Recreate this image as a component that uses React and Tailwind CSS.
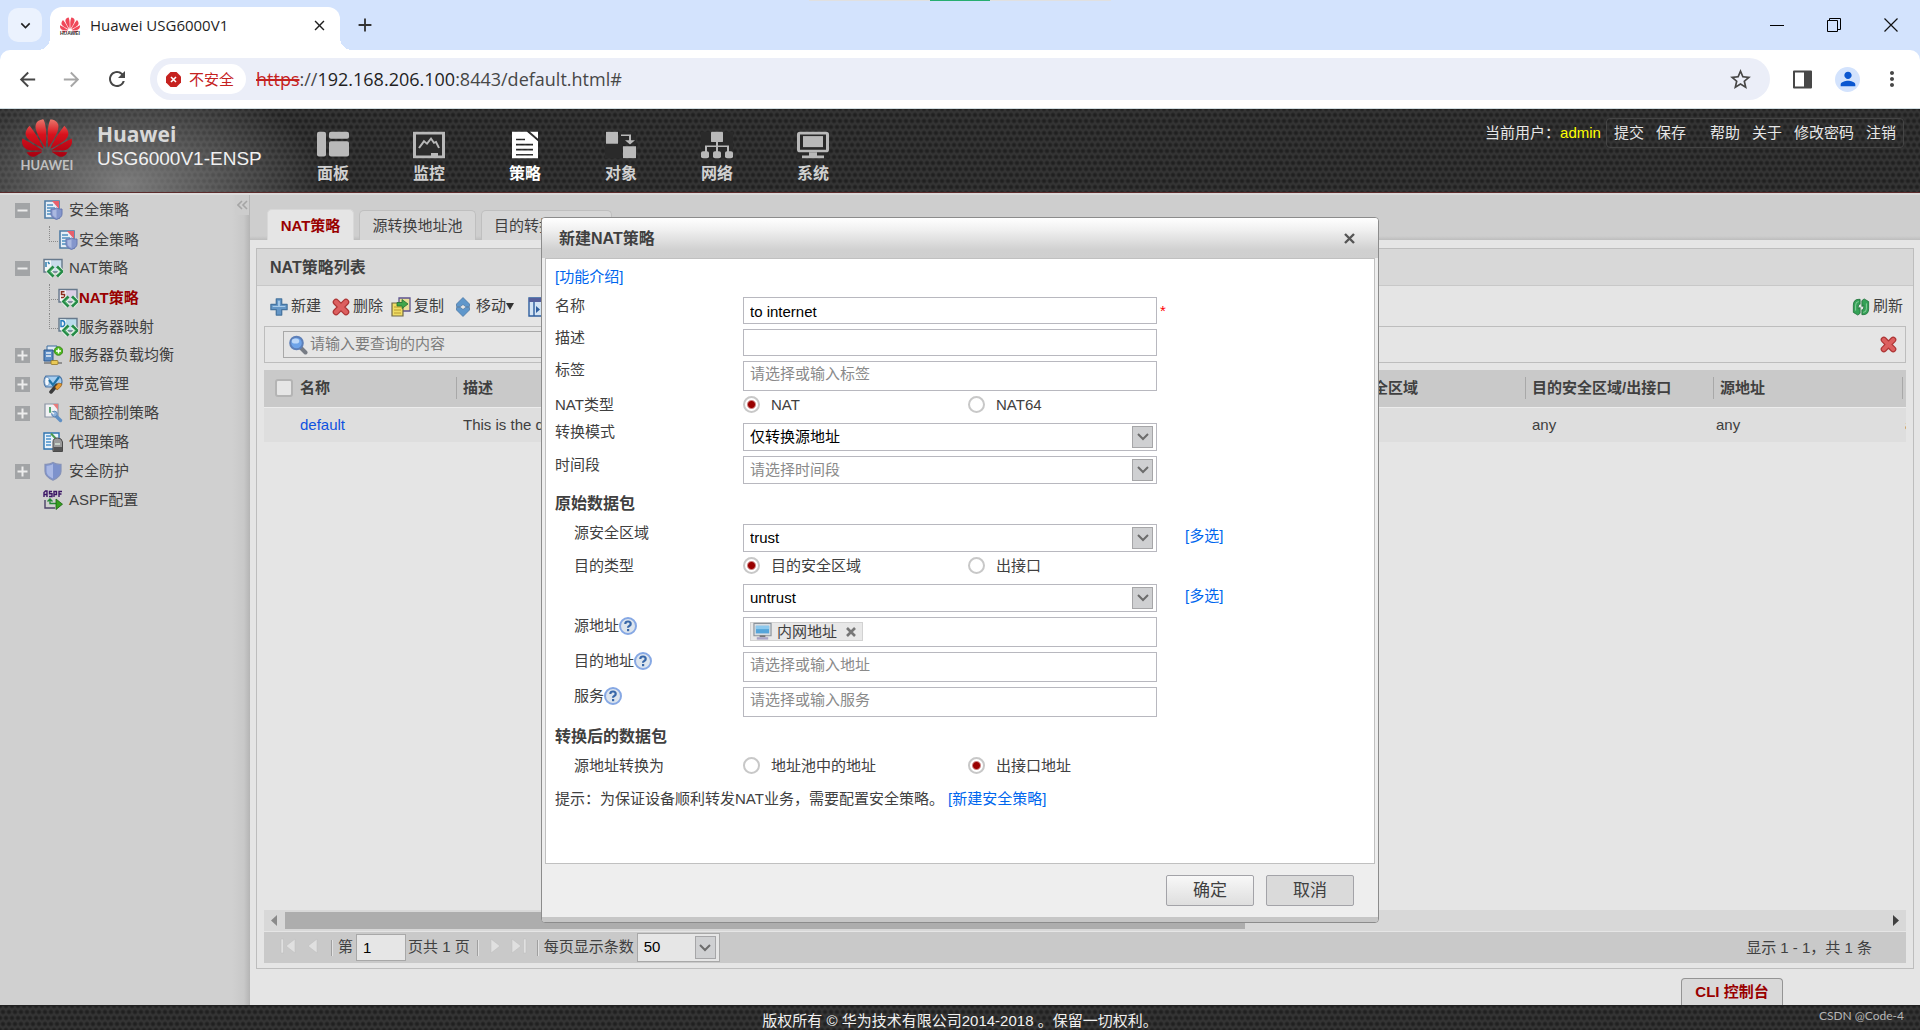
import React from "react";
import { SiHuawei } from "react-icons/si";
import {
  MdAdd,
  MdArrowBack,
  MdArrowForward,
  MdClose,
  MdExpandMore,
  MdMoreVert,
  MdPerson,
  MdRefresh,
  MdStarOutline,
} from "react-icons/md";

const DOTS =
  "bg-[#343434] bg-[radial-gradient(circle,#202020_0,#202020_1px,transparent_3px),radial-gradient(circle,#202020_0,#202020_1px,transparent_3px)] bg-[length:6px_12px] bg-[position:0_0,3px_6px]";

/* ---------- icons ---------- */

function Svg({ children, size = 20, box = 20, className = "" }) {
  return (
    <svg aria-hidden="true" width={size} height={size} viewBox={`0 0 ${box} ${box}`} className={`shrink-0 ${className}`}>
      {children}
    </svg>
  );
}

function PolicyIcon() {
  return (
    <Svg>
      <path d="M2 1h14v17H2z" fill="#e6eef6" stroke="#4f7ca5" strokeWidth="1.6" />
      <path d="M4 5h6M4 8h8M4 11h7M4 14h5" stroke="#4d8fc0" strokeWidth="1.5" />
      <path d="M9 1h7v8z" fill="#e8606c" />
      <path d="M13.500 8c2 1 3.500 1.200 5.500 1v5c0 2.500-2 4.200-5.500 5.500-3.500-1.300-5.500-3-5.500-5.500V9c2 .2 3.500 0 5.500-1z" fill="#8496cc" stroke="#6778b0" />
      <path d="M13.500 9.500V18c-2.500-1.200-4-2.300-4-4.500v-3.300c1.400 0 2.700-.2 4-.7z" fill="#aab8e0" />
    </Svg>
  );
}

function NatIcon({ letter = "", tint = "#c9dcea" }) {
  return (
    <Svg>
      <path d="M1 1.500h18v12.500H1z" fill={tint} stroke="#67798c" strokeWidth="1.400" />
      <path d="M2 2.500h6v10.500H2z" fill="#f4f6f8" />
      {letter === "S" && <path d="M6.500 3.800h-3v2.700h3v3h-3.500" fill="none" stroke="#8b2f20" strokeWidth="1.500" />}
      {letter === "D" && <path d="M3 3.800h1.500q2.200.3 2.200 2.900t-2.200 2.900H3z" fill="none" stroke="#2a80c0" strokeWidth="1.500" />}
      {letter === "" && <path d="M3 4v5M5 4l1.500 2" stroke="#2f7fae" strokeWidth="1.500" />}
      <path d="M10 9l-4 4.500 4 4.500M14.500 9l4 4.500-4 4.500" fill="none" stroke="#e6f3ea" strokeWidth="5" />
      <path d="M10.500 8.500l-5 5 5 5M14 8.500l5 5-5 5" fill="none" stroke="#258a47" strokeWidth="2.800" />
      <path d="M10 10.500l-3 3 3 3M14.500 10.500l3 3-3 3" fill="none" stroke="#6cc487" strokeWidth="1" />
    </Svg>
  );
}

function BalanceIcon() {
  return (
    <Svg>
      <path d="M4 1h10v5H4z" fill="#dfe9f3" stroke="#3f6ea0" />
      <path d="M1 5h9v11H1z" fill="#5c8cc4" stroke="#2b568c" />
      <path d="M3 8h5M3 11h5" stroke="#e8f1fa" strokeWidth="1.300" />
      <circle cx="15.500" cy="6" r="4.300" fill="#4eb81e" stroke="#2e7d12" strokeWidth=".8" />
      <path d="M15.500 3.500v5M13 6h5" stroke="#fff" strokeWidth="1.500" />
      <path d="M1 18h18" stroke="#7a7a7a" strokeWidth="1.500" />
      <rect x="8" y="15.500" width="7" height="4" rx="1" fill="#e9c956" stroke="#927524" strokeWidth=".8" />
    </Svg>
  );
}

function BandwidthIcon() {
  return (
    <Svg>
      <path d="M3 2h13q3 2 3 5.500T16 13H3q-2-2-2-5.500T3 2z" fill="#a5cdf0" stroke="#4a75a6" strokeWidth="1.200" />
      <ellipse cx="4" cy="7.500" rx="2.300" ry="4.500" fill="#f3f8fd" stroke="#5e86b3" strokeWidth=".8" />
      <path d="M6 6l4 5 6-8" fill="none" stroke="#1f74a8" strokeWidth="2.200" />
      <path d="M8 18l6-7" stroke="#3b3b3b" strokeWidth="3.500" strokeLinecap="round" />
      <path d="M12 13l3.500-4 3.500 1-1.500 3-3.500 3z" fill="#e49b35" stroke="#9c6216" strokeWidth=".7" />
    </Svg>
  );
}

function QuotaIcon() {
  return (
    <Svg>
      <path d="M2 1h13v13H2z" fill="#f1f1f4" stroke="#8a94a3" strokeWidth="1.200" />
      <path d="M10 1h5v6z" fill="#e67b7b" />
      <path d="M7 4v5h5" fill="none" stroke="#3b9a5a" strokeWidth="1.700" />
      <path d="M11 11l6.500 6.500" stroke="#5f8fc4" strokeWidth="3.400" strokeLinecap="round" />
      <circle cx="11.500" cy="11" r="2.800" fill="#8db3dc" stroke="#5f86b5" />
      <path d="M8 8.500l3 2.500" stroke="#f1f1f4" strokeWidth="1.500" />
    </Svg>
  );
}

function ProxyIcon() {
  return (
    <Svg>
      <path d="M1 1h15v16H1z" fill="#eaf3fa" stroke="#2f74b0" strokeWidth="1.400" />
      <path d="M3 4h5M3 7h5M3 10h5M3 13h5" stroke="#4b93cc" strokeWidth="1.400" />
      <path d="M8 1.500L15 9" stroke="#4a9b51" strokeWidth="2" />
      <path d="M10 10q0-4 4.500-4T19.500 10v9.500H10z" fill="#9a9a9a" stroke="#4b4b4b" />
      <path d="M10.500 15h8.500v4h-8.500z" fill="#555" />
      <path d="M12 12h5" stroke="#dff0df" strokeWidth="1.300" />
    </Svg>
  );
}

function ShieldIcon() {
  return (
    <Svg>
      <path d="M10 1.500c2.500 1.500 5 2 8 1.800v7c0 4-3 6.700-8 8.900-5-2.200-8-4.900-8-8.900v-7c3 .2 5.500-.3 8-1.800z" fill="#7d92cc" stroke="#8793b8" strokeWidth="1.200" />
      <path d="M10 3v14.500c-4-1.900-6.500-4-6.500-7.300V4.700C6 4.800 8 4.300 10 3z" fill="#a9b8e4" />
    </Svg>
  );
}

function AspfIcon() {
  return (
    <Svg>
      <path d="M1 7V2.500L2.500 1H4v6M1 4.500h3M9 1.500H6.500v2.300H9v2.700H6M11 7V1.500h2.500v3H11M16 7V1.500h3M16 4h2.500" fill="none" stroke="#3c1766" strokeWidth="1.400" />
      <path d="M2 10v8h10" fill="none" stroke="#4c4468" strokeWidth="1.400" />
      <path d="M7 9.500v4h6M4.500 11.500L7 9l2.500 2.500" fill="none" stroke="#238a35" strokeWidth="1.400" />
      <path d="M13 9l6.500 5.200L13 19.500z" fill="#34a01f" stroke="#1c5f12" strokeWidth=".8" />
    </Svg>
  );
}

function CrossIcon({ size = 18 }) {
  return (
    <Svg size={size}>
      <path d="M4.500 4.500l11 11M15.500 4.500l-11 11" stroke="#ad3535" strokeWidth="7.400" strokeLinecap="round" />
      <path d="M4.500 4.500l11 11M15.500 4.500l-11 11" stroke="#dc5f5f" strokeWidth="4.800" strokeLinecap="round" />
    </Svg>
  );
}

function PlusIcon() {
  return (
    <Svg size={18}>
      <path d="M7 1h6v6h6v6h-6v6H7v-6H1V7h6z" fill="#6496c6" stroke="#46749f" strokeWidth="1.400" strokeLinejoin="round" />
      <path d="M9 3h2v6h6v1H3V9h6z" fill="#a9cbe8" />
    </Svg>
  );
}

function CopyIcon() {
  return (
    <Svg>
      <path d="M8 1h11v13H8z" fill="#e9df9a" stroke="#5d5390" strokeWidth="1.300" />
      <path d="M1 6h11v13H1z" fill="#f0dd63" stroke="#6f6848" strokeWidth="1.200" />
      <path d="M3 10h7M3 13h7M3 16h7" stroke="#b79a30" strokeWidth="1.200" />
      <path d="M6 5.500h5V2.500l6 4.500-6 4.500V9H6z" fill="#3fa64b" stroke="#23702d" strokeWidth=".8" />
    </Svg>
  );
}

function MoveIcon() {
  return (
    <Svg>
      <path d="M10 .5l6.500 6.500v2.500h-4L10 7.500 7.500 9.500h-4V7z" fill="#5f97cb" stroke="#42719f" strokeWidth=".7" />
      <path d="M10 19.500l6.500-6.500v-2.500h-4L10 12.500l-2.500-2h-4V13z" fill="#5f97cb" stroke="#42719f" strokeWidth=".7" />
    </Svg>
  );
}

function InsertIcon() {
  return (
    <Svg>
      <path d="M1 1h18v18H1z" fill="#d4e4f4" stroke="#2f5f9f" strokeWidth="1.400" />
      <path d="M1 1h18v4H1z" fill="#56609c" />
      <path d="M6 5v14M14 5v14" stroke="#2f5f9f" strokeWidth="1.400" />
      <path d="M8 9l4 3.500L8 16z" fill="#2f5f9f" />
    </Svg>
  );
}

function SearchIcon() {
  return (
    <Svg>
      <path d="M12 12l5.500 5.500" stroke="#777c85" strokeWidth="4" strokeLinecap="round" />
      <circle cx="8.500" cy="8" r="6.300" fill="#6ea3e8" stroke="#5d7fb8" strokeWidth="2" />
      <ellipse cx="7.500" cy="6" rx="3.800" ry="2.600" fill="#bcd7f8" />
    </Svg>
  );
}

function RefreshGreen() {
  return (
    <Svg size={18}>
      <path d="M1.500 16V8q0-6.500 6-6.500H9v5.500h-.500q-1.500 0-1.500 2v3l2-1.500V17l-2.500 2z" fill="#35a257" stroke="#1c7038" strokeWidth=".9" />
      <path d="M18.500 4v8q0 6.500-6 6.500H11v-5.500h.500q1.500 0 1.500-2V8l-2 1.500V3l2.500-2z" fill="#35a257" stroke="#1c7038" strokeWidth=".9" />
      <path d="M4 14V8q0-4 3.500-4M16 6v6q0 4-3.500 4" fill="none" stroke="#8ed3a1" strokeWidth="1" />
    </Svg>
  );
}

function HelpIcon() {
  return (
    <button type="button" aria-label="帮助说明" className="h-[18px] w-[18px] shrink-0">
      <svg width="18" height="18" viewBox="0 0 18 18" aria-hidden="true">
        <circle cx="9" cy="9" r="8" fill="#dde5ee" stroke="#86a8e4" strokeWidth="2" />
        <path d="M6.300 7q0-2.500 2.700-2.500T11.700 7q0 1.200-1.500 2Q9 9.600 9 10.800" fill="none" stroke="#3867a8" strokeWidth="2.200" />
        <rect x="8" y="12" width="2.200" height="2.200" fill="#3867a8" />
      </svg>
    </button>
  );
}

function ComputerIcon() {
  return (
    <Svg size={19}>
      <path d="M1 1.500h18v13H1z" fill="#d8dde2" stroke="#8b939b" strokeWidth="1.200" />
      <path d="M3 4h14v8H3z" fill="#55a5da" />
      <path d="M3 4h14v3.500H3z" fill="#8cc9ee" />
      <path d="M7 14h6v2H7z" fill="#777" />
      <path d="M4 16h12v2.500H4z" fill="#a7a3c4" />
    </Svg>
  );
}

const navIcons = {
  panel: (
    <>
      <rect x="0" y="1" width="9" height="29" rx="2" />
      <rect x="12" y="1" width="20" height="8" rx="2" />
      <rect x="12" y="12" width="20" height="18" rx="2" />
    </>
  ),
  monitor: (
    <>
      <path d="M1 1h30v31H1z" fill="#2c2c2c" />
      <path d="M0 1h32v31H0zM3 4v25h15v-3h7v3h4V4z" fillRule="evenodd" />
      <path d="M6 20l5-8 3 3 4-6 3 5 2-1 3 7" fill="none" stroke="currentColor" strokeWidth="2" />
    </>
  ),
  policy: (
    <>
      <path d="M3 1h15l11 11v20H3zM7 9v2h9V9zm0 6v2h17v-2zm0 6v2h17v-2zm0 6v2h17v-2z" fillRule="evenodd" />
      <path d="M21 1h8v8z" />
    </>
  ),
  object: (
    <>
      <path d="M0 15h17v17H0zM14 1h17v15H14z" fill="#2a2a2a" />
      <rect x="1" y="1" width="12" height="14" />
      <rect x="18" y="18" width="13" height="14" />
      <path d="M16 4h10v7h4l-5 5-5-5h4V6h-8z" />
    </>
  ),
  network: (
    <>
      <path d="M0 1h32v31H0z" fill="#2a2a2a" />
      <rect x="10" y="1" width="12" height="12" rx="1" />
      <path d="M15 12h2v5h11v8h-2v-6h-9v6h-2v-6H6v6H4v-8h11z" />
      <rect x="0" y="24" width="8" height="8" rx="2" />
      <rect x="12" y="24" width="8" height="8" rx="2" />
      <rect x="24" y="24" width="8" height="8" rx="2" />
    </>
  ),
  system: (
    <>
      <path d="M0 1h32v31H0z" fill="#2a2a2a" />
      <path d="M3 1h26q3 0 3 3v18q0 3-3 3H3q-3 0-3-3V4q0-3 3-3zm0 3v18h26V4z" fillRule="evenodd" />
      <rect x="6" y="6" width="20" height="13" />
      <path d="M12 25h8v4h7v3H5v-3h7z" />
    </>
  ),
};

/* ---------- browser frame ---------- */

function BrowserBar() {
  return (
    <div className="shrink-0 bg-[#d3e3fd] font-['Open_Sans','Noto_Sans_CJK_SC',sans-serif]">
      <div className="relative flex h-[50px] items-end">
        <div className="absolute top-0 left-1/2 flex h-px w-[302px] -translate-x-1/2 justify-center bg-[#e0e0e0]">
          <div className="w-[60px] bg-[#27ae70]" />
        </div>
        <button type="button" aria-label="搜索标签页" className="mb-2 ml-2 flex h-[34px] w-[34px] items-center justify-center rounded-[10px] bg-[#ebf2fe]">
          <MdExpandMore size={19} className="text-[#1f1f1f]" />
        </button>
        <div className="relative ml-2 flex h-[43px] w-[290px] items-center rounded-t-[12px] bg-white pb-[7px] pr-3 pl-[10px] before:absolute before:bottom-0 before:-left-3 before:size-3 before:bg-[radial-gradient(circle_at_0_0,transparent_12px,white_12px)] after:absolute after:-right-3 after:bottom-0 after:size-3 after:bg-[radial-gradient(circle_at_100%_0,transparent_12px,white_12px)]">
          <div className="flex w-5 flex-col items-center">
            <SiHuawei size={20} className="text-[#f0485a]" />
            <span className="-mt-1 font-['Liberation_Sans',sans-serif] text-[5px] leading-[5px] font-bold text-[#333]">HUAWEI</span>
          </div>
          <span className="ml-[10px] flex-1 text-[15px] text-[#1f1f1f]">Huawei USG6000V1</span>
          <button type="button" aria-label="关闭标签页"><MdClose size={17} className="text-[#1f1f1f]" /></button>
        </div>
        <button type="button" aria-label="新标签页" className="mb-[14px] ml-[14px]"><MdAdd size={22} className="text-[#333]" /></button>
        <div className="mb-[18px] ml-auto flex items-center gap-[43px] pr-[22px]">
          <button type="button" aria-label="最小化"><svg width="14" height="14" viewBox="0 0 14 14"><path d="M0 7.500h14" stroke="#000" /></svg></button>
          <button type="button" aria-label="还原"><svg width="14" height="14" viewBox="0 0 14 14" fill="none" stroke="#000"><path d="M.5 2.500h10v11H.5zM2.500 2.500v-2h11v11h-3" /></svg></button>
          <button type="button" aria-label="关闭"><svg width="14" height="14" viewBox="0 0 14 14"><path d="M.5.500l13 13M13.500.500l-13 13" stroke="#111" strokeWidth="1.200" /></svg></button>
        </div>
      </div>
      <div className="flex h-[59px] items-center rounded-t-[10px] border-b border-[#cfdbe0] bg-white pr-4 pl-4 text-[#474747]">
        <button type="button" aria-label="后退" className="mr-[21px]"><MdArrowBack size={23} /></button>
        <button type="button" aria-label="前进" className="mr-[22px] text-[#a6a6a6]"><MdArrowForward size={23} /></button>
        <button type="button" aria-label="刷新页面" className="mr-[21px]"><MdRefresh size={24} /></button>
        <div className="flex h-[42px] flex-1 items-center rounded-full bg-[#ebeef8] pr-[17px] pl-[7px]">
          <div className="flex h-[30px] items-center gap-2 rounded-full bg-white px-[9px] pr-3 text-[15px] text-[#c5221f]">
            <svg width="15" height="15" viewBox="0 0 15 15" aria-hidden="true"><path d="M4.500 0h6L15 4.500v6L10.500 15h-6L0 10.500v-6z" fill="#c5221f" /><path d="M5 5l5 5M10 5l-5 5" stroke="#fff" strokeWidth="1.600" /></svg>
            不安全
          </div>
          <div className="ml-[10px] flex-1 text-[18px] leading-[26px] text-[#474747]">
            <span className="text-[#c5221f] line-through decoration-2">https</span>
            <span>://</span><span className="text-[#1f1f1f]">192.168.206.100</span><span>:8443/default.html#</span>
          </div>
          <button type="button" aria-label="收藏"><MdStarOutline size={25} /></button>
        </div>
        <button type="button" aria-label="侧边栏" className="ml-[23px]">
          <svg width="19" height="19" viewBox="0 0 19 19"><path d="M1 1.500h17v16H1z" fill="none" stroke="#474747" strokeWidth="2" strokeLinejoin="round" /><path d="M11 1h7v17h-7z" fill="#474747" /></svg>
        </button>
        <button type="button" aria-label="个人资料" className="ml-[23px] flex size-[25px] items-center justify-center rounded-full bg-[#d3e3fd] text-[#0b57d0]"><MdPerson size={22} /></button>
        <button type="button" aria-label="更多" className="ml-[20px]"><MdMoreVert size={24} /></button>
      </div>
    </div>
  );
}

/* ---------- application header ---------- */

const nav = [
  ["panel", "面板"],
  ["monitor", "监控"],
  ["policy", "策略"],
  ["object", "对象"],
  ["network", "网络"],
  ["system", "系统"],
];

function Header() {
  return (
    <header className={`shrink-0 border-b border-[#5c2c2c] ${DOTS}`}>
      <div className="flex h-[83px] items-start bg-[radial-gradient(ellipse_200px_110px_at_125px_75px,rgba(150,150,150,0.75),transparent)]">
        <div className="flex w-[317px] items-start gap-[25px] pl-[22px]">
          <div className="flex w-[50px] flex-col items-center pt-[4px]">
            <svg width="0" height="0" className="absolute" aria-hidden="true">
              <defs>
                <linearGradient id="petals" x1="0" y1="0" x2="0" y2="1">
                  <stop offset="0" stopColor="#e8786c" />
                  <stop offset=".4" stopColor="#d8121d" />
                  <stop offset="1" stopColor="#a80010" />
                </linearGradient>
              </defs>
            </svg>
            <SiHuawei size={50} fill="url(#petals)" />
            <span className="-mt-[5px] font-['Lato',sans-serif] text-[13px] leading-[14px] font-bold text-[#c0c0c0]">HUAWEI</span>
          </div>
          <div className="pt-[12px] text-[#d8d8d8]">
            <div className="font-['Open_Sans',sans-serif] text-[21px] leading-[27px] font-bold">Huawei</div>
            <div className="text-[19px] leading-[22px] text-[#f0f0f0]">USG6000V1-ENSP</div>
          </div>
        </div>
        <nav className="flex gap-16 pt-[22px]">
          {nav.map(([id, label]) => (
            <a
              key={id}
              href="#"
              className={`flex w-8 flex-col items-center text-[16px] leading-[20px] font-bold ${id === "policy" ? "text-white" : "text-[#b9b9b9]"}`}
            >
              <svg width="32" height="28" viewBox="0 0 32 33" preserveAspectRatio="none" fill="currentColor" aria-hidden="true">
                {navIcons[id]}
              </svg>
              <span className={`mt-[5px] whitespace-nowrap ${id === "policy" ? "text-white" : "text-[#d0d0d0]"}`}>{label}</span>
            </a>
          ))}
        </nav>
        <div className="mt-2 mr-[16px] ml-auto flex items-center text-[15px] leading-[31px] text-[#e6e6e6]">
          <span>当前用户：</span>
          <span className="mr-[5px] text-[#ffff00]">admin</span>
          <div className="flex gap-3 rounded border border-[#454545] px-[7px] leading-[28px]">
            <a href="#">提交</a>
            <a href="#" className="mr-3">保存</a>
            <a href="#">帮助</a>
            <a href="#">关于</a>
            <a href="#">修改密码</a>
            <a href="#">注销</a>
          </div>
        </div>
      </div>
    </header>
  );
}

/* ---------- sidebar ---------- */

const tree = [
  { label: "安全策略", icon: <PolicyIcon />, open: true },
  { label: "安全策略", icon: <PolicyIcon />, child: true, last: true },
  { label: "NAT策略", icon: <NatIcon />, open: true },
  { label: "NAT策略", icon: <NatIcon letter="S" tint="#dccfe6" />, child: true, active: true },
  { label: "服务器映射", icon: <NatIcon letter="D" tint="#b9dcec" />, child: true, last: true },
  { label: "服务器负载均衡", icon: <BalanceIcon />, open: false },
  { label: "带宽管理", icon: <BandwidthIcon />, open: false },
  { label: "配额控制策略", icon: <QuotaIcon />, open: false },
  { label: "代理策略", icon: <ProxyIcon /> },
  { label: "安全防护", icon: <ShieldIcon />, open: false },
  { label: "ASPF配置", icon: <AspfIcon /> },
];

function TreeRow({ item }) {
  if (item.child) {
    return (
      <li className="flex h-[29px] items-center pt-[2px] pl-[49px]">
        <span className="flex h-full w-[9px] flex-col">
          <span className="h-[16px] border-b border-l border-dotted border-[#8a8a8a]" />
          {!item.last && <span className="flex-1 border-l border-dotted border-[#8a8a8a]" />}
        </span>
        {item.icon}
        <a href="#" className={item.active ? "ml-px font-bold text-[#990000]" : "ml-px"}>{item.label}</a>
      </li>
    );
  }
  return (
    <li className="flex h-[29px] items-center pl-[15px]">
      <span className="mr-[13px] flex w-[15px]">
        {item.open !== undefined && (
          <button type="button" aria-label={item.open ? "折叠" : "展开"} className="mt-px h-[15px] w-[15px] bg-[#a2a4a6]">
            <svg width="15" height="15" viewBox="0 0 15 15"><path d={item.open ? "M2.500 7.500h10" : "M2.500 7.500h10M7.500 2.500v10"} stroke="#ececec" strokeWidth="2" /></svg>
          </button>
        )}
      </span>
      {item.icon}
      <a href="#" className="ml-[6px]">{item.label}</a>
    </li>
  );
}

function Sidebar() {
  return (
    <aside className="relative w-[250px] shrink-0 border-t-2 border-[#dcdcdc] bg-[linear-gradient(to_right,#d0d0d0_0,#d0d0d0_232px,#c8c8c8_244px,#b4b4b4_250px)] text-[15px] leading-[20px] text-[#404040]">
      <button type="button" aria-label="收起菜单" className="absolute top-0 right-px flex h-5 w-[14px] items-center justify-center bg-[#cdcdcd]">
        <svg width="11" height="10" viewBox="0 0 11 10" fill="none" stroke="#a5a5a5" strokeWidth="1.600"><path d="M5 1L1 5l4 4M10 1L6 5l4 4" /></svg>
      </button>
      <ul>
        {tree.map((item, i) => <TreeRow key={i} item={item} />)}
      </ul>
    </aside>
  );
}

/* ---------- policy list ---------- */

function Chevron({ className }) {
  return (
    <span className={`pointer-events-none absolute flex w-[21px] items-center justify-center border border-[#a6a6a8] bg-[#cfd0d2] ${className}`}>
      <svg width="12" height="8" viewBox="0 0 12 8"><path d="M1 1l5 5 5-5" fill="none" stroke="#6c6c6c" strokeWidth="2" /></svg>
    </span>
  );
}

function ToolButton({ icon, children, className = "" }) {
  return (
    <button type="button" className={`flex items-center gap-[3px] whitespace-nowrap ${className}`}>
      {icon}
      {children}
    </button>
  );
}

const columns = [
  ["名称", "w-[192px]", "pl-9"],
  ["描述", "w-[300px]", "pl-[7px]"],
  ["标签", "w-[290px]", "pl-[7px]"],
  ["时间段", "w-[290px]", "pl-[7px]"],
  ["源安全区域", "w-[189px]", "pl-[7px]"],
  ["目的安全区域/出接口", "w-[188px]", "pl-[7px]"],
  ["源地址", "w-[189px]", "pl-[7px]"],
  ["目的地址", "w-[189px]", "pl-[7px]"],
];

function PolicyTable() {
  return (
    <div className="overflow-hidden">
      <table className="w-[1827px] table-fixed border-collapse text-left text-[15px] text-[#404040]">
        <thead>
          <tr className="h-[37px] border-b border-[#ececec] bg-[#c9c9c9]">
            {columns.map(([label, w], i) => (
              <th key={label} className={`${w} p-0`}>
                <div className="flex items-center">
                  {i === 0 && <input type="checkbox" aria-label="全选" className="mr-[7px] ml-[11px] size-[18px] appearance-none rounded-[3px] border-2 border-[#b4b4b4] bg-[#e6e6e6]" />}
                  {i > 0 && <span className="h-[22px] w-px bg-[#a8a8a8]" />}
                  <span className={i === 0 ? "" : "pl-[6px]"}>{label}</span>
                </div>
              </th>
            ))}
          </tr>
        </thead>
        <tbody>
          <tr className="h-[35px] bg-[#dedede]">
            {["default", "This is the default NAT policy", "", "", "any", "any", "any", "any"].map((v, i) => (
              <td key={i} className={`p-0 ${i > 5 ? "pl-[3px]" : columns[i][2]}`}>
                {i === 0 ? <a href="#" className="text-[#0f52e0]">{v}</a> : v}
              </td>
            ))}
          </tr>
        </tbody>
      </table>
    </div>
  );
}

function PageArrow({ d, label, className }) {
  return (
    <button type="button" aria-label={label} className={className}>
      <svg width="16" height="16" viewBox="0 0 16 16" fill="#e0e0e0" stroke="#bcbcbc" strokeWidth=".5"><path d={d} /></svg>
    </button>
  );
}

function Separator({ className }) {
  return <span className={`h-4 w-[2px] border-l border-[#a0a0a0] bg-[#e2e2e2] ${className}`} />;
}

function Pager() {
  return (
    <div className="flex h-[31px] items-center bg-[#c9c9c9] text-[15px] text-[#404040]">
      <PageArrow label="首页" className="mb-[3px] ml-[16px]" d="M1 1h2.500v14H1zM15 1v14L6 8z" />
      <PageArrow label="上一页" className="mb-[3px] ml-[9px]" d="M12 1v14L3 8z" />
      <Separator className="mr-[5px] ml-[10px]" />
      <label className="flex items-center gap-[3px]">
        第
        <input type="text" defaultValue="1" className="h-[27px] w-[50px] border border-[#a8a8a8] bg-[#e6e6e6] px-[6px] text-[15px] text-black" />
      </label>
      <span className="ml-[2px]">页共 1 页</span>
      <Separator className="ml-[7px]" />
      <PageArrow label="下一页" className="mb-[3px] ml-[8px]" d="M4 1v14l9-7z" />
      <PageArrow label="末页" className="mb-[3px] ml-[8px]" d="M1 1v14l9-7zM12.500 1H15v14h-2.500z" />
      <Separator className="ml-[10px]" />
      <label htmlFor="page-size" className="ml-[5px]">每页显示条数</label>
      <div className="relative ml-[3px]">
        <select id="page-size" className="block h-[29px] w-[83px] appearance-none border border-[#a8a8a8] bg-[#e6e6e6] px-[6px] text-[15px] text-black">
          <option>50</option>
        </select>
        <Chevron className="top-[3px] right-[4px] h-[23px]" />
      </div>
      <span className="mt-[2px] mr-[34px] ml-auto">显示 1 - 1，共 1 条</span>
    </div>
  );
}

function ListPanel() {
  return (
    <section className="mx-[6px] mt-[8px] mb-[9px] flex flex-1 flex-col border border-[#bdbdbd]">
      <h2 className="h-[37px] border-b border-[#c8c8c8] bg-[#d8d8d8] pl-[13px] text-[16px] leading-[38px] font-bold text-[#404040]">NAT策略列表</h2>
      <div className="flex min-h-0 flex-1 flex-col px-[7px] pb-[5px]">
        <div className="flex h-[40px] items-center pt-px pl-[6px] text-[15px] text-[#404040]">
          <ToolButton icon={<PlusIcon />}>新建</ToolButton>
          <ToolButton icon={<CrossIcon />} className="ml-[11px]">删除</ToolButton>
          <ToolButton icon={<CopyIcon />} className="ml-[8px]">复制</ToolButton>
          <ToolButton icon={<MoveIcon />} className="ml-[9px]">
            移动
            <svg width="8" height="7" viewBox="0 0 8 7" className="-ml-[3px]"><path d="M0 0h8L4 7z" fill="#333" /></svg>
          </ToolButton>
          <ToolButton icon={<InsertIcon />} className="ml-[14px]">插入</ToolButton>
          <ToolButton icon={<RefreshGreen />} className="mr-[3px] ml-auto">刷新</ToolButton>
        </div>
        <div className="flex h-[37px] items-center justify-between border border-[#bdbdbd] pr-[8px] pl-[18px]">
          <label className="flex h-[27px] w-[300px] items-center gap-[2px] border border-[#a8a8a8] pl-[4px]">
            <SearchIcon />
            <input type="text" aria-label="查询" placeholder="请输入要查询的内容" className="w-full bg-transparent text-[15px] outline-none placeholder:text-[#7c7c7c]" />
          </label>
          <button type="button" aria-label="清除查询"><CrossIcon size={17} /></button>
        </div>
        <div className="mt-[7px] flex-1"><PolicyTable /></div>
        <div className="mb-px flex h-[21px] items-center bg-[#d8d8d8]">
          <svg width="21" height="11" viewBox="0 0 21 11"><path d="M13 0v11L7 5.500z" fill="#8a8a8a" /></svg>
          <div className="flex-1"><div className="h-[17px] w-3/5 bg-[#adadad]" /></div>
          <svg width="21" height="11" viewBox="0 0 21 11"><path d="M8 0v11l6-5.500z" fill="#404040" /></svg>
        </div>
        <Pager />
      </div>
    </section>
  );
}

function Main() {
  return (
    <main className="flex min-w-0 flex-1 flex-col bg-[#e5e5e5]">
      <div className="flex h-[47px] items-end gap-[5px] border-t-2 border-[#dadada] bg-[linear-gradient(#cecece_0,#cecece_41px,#bdbdbd_45px)] pl-[17px] text-[15px] leading-[29px] text-[#404040]">
        <button type="button" className="h-[31px] w-[87px] rounded-t-[5px] border border-b-0 border-[#d8d8d8] bg-[#e5e5e5] font-bold text-[#990000]">NAT策略</button>
        <button type="button" className="h-[30px] w-[117px] rounded-t-[5px] border border-b-0 border-[#bfbfbf] bg-[#d6d6d6]">源转换地址池</button>
        <button type="button" className="h-[30px] w-[131px] rounded-t-[5px] border border-b-0 border-[#bfbfbf] bg-[#d6d6d6]">目的转换地址池</button>
      </div>
      <ListPanel />
      <button type="button" className="mr-[137px] h-[27px] w-[102px] self-end rounded-t-[4px] border border-b-0 border-[#949494] bg-[#d9d9d9] text-[15px] leading-[24px] font-bold text-[#990000]">CLI 控制台</button>
    </main>
  );
}

/* ---------- dialog ---------- */

function Row({ label, id, help, indent, after, children }) {
  return (
    <div className="flex items-start">
      <div className={`flex w-[188px] shrink-0 items-center leading-[18px] ${indent ? "pl-[19px]" : ""}`}>
        {id ? <label htmlFor={id}>{label}</label> : <span>{label}</span>}
        {help && <HelpIcon />}
      </div>
      <div className="relative w-[414px]">{children}</div>
      {after}
    </div>
  );
}

const FIELD = "block w-full border border-[#b8b8bf] bg-white px-[6px] text-[15px] placeholder:text-[#8a8a8a]";

function Select({ id, value, muted, label }) {
  return (
    <>
      <select id={id} aria-label={label} className={`h-[28px] appearance-none ${FIELD} ${muted ? "text-[#8a8a8a]" : "text-black"}`}>
        <option>{value}</option>
      </select>
      <Chevron className="top-[3px] right-[4px] h-[22px]" />
    </>
  );
}

function Radios({ name, options, checked }) {
  return (
    <div className="flex h-[22px] items-start">
      {options.map((o, i) => (
        <label key={o} className="flex w-[225px] shrink-0 items-center gap-[11px] leading-[17px] whitespace-nowrap">
          <input
            type="radio"
            name={name}
            defaultChecked={i === checked}
            className="size-[17px] appearance-none rounded-full border-2 border-[#c8c8c8] bg-white checked:bg-[radial-gradient(circle,#990000_3px,#ffffff_5px)]"
          />
          {o}
        </label>
      ))}
    </div>
  );
}

const link = "text-[#0066ee]";

function Dialog() {
  const multi = <a href="#" className={`ml-[28px] mt-[3px] leading-[18px] ${link}`}>[多选]</a>;
  return (
    <div role="dialog" aria-labelledby="dialog-title" className="absolute inset-x-0 top-[217px] mx-auto w-[838px] rounded-[4px] border border-[#8c8c8c] bg-[#eeeeee] text-[15px] text-[#404040]">
      <div className="flex h-[40px] items-center justify-between rounded-t-[3px] bg-[linear-gradient(#ffffff,#f0f0f0_30%,#d0d0d0_80%,#cfcfcf)] pt-px pr-[23px] pl-[17px]">
        <h2 id="dialog-title" className="text-[16px] font-bold">新建NAT策略</h2>
        <button type="button" aria-label="关闭对话框">
          <svg width="11" height="11" viewBox="0 0 11 11"><path d="M1 1l9 9M10 1l-9 9" stroke="#555" strokeWidth="2.400" /></svg>
        </button>
      </div>
      <form className="mx-[3px] flex flex-col gap-[5px] border border-[#c0c0c0] bg-white pt-[9px] pr-4 pb-[49px] pl-[9px]">
        <a href="#" className={`mb-[6px] self-start leading-[18px] ${link}`}>[功能介绍]</a>
        <Row label="名称" id="f-name" after={<span className="ml-[3px] leading-[27px] text-[#ff0000]">*</span>}>
          <input id="f-name" type="text" defaultValue="to internet" className={`h-[27px] pt-[2px] text-black ${FIELD}`} />
        </Row>
        <Row label="描述" id="f-desc">
          <input id="f-desc" type="text" className={`h-[27px] text-black ${FIELD}`} />
        </Row>
        <Row label="标签" id="f-tag">
          <input id="f-tag" type="text" placeholder="请选择或输入标签" className={`h-[30px] pb-[6px] text-black ${FIELD}`} />
        </Row>
        <Row label="NAT类型"><Radios name="nat-type" options={["NAT", "NAT64"]} checked={0} /></Row>
        <Row label="转换模式" id="f-mode"><Select id="f-mode" value="仅转换源地址" /></Row>
        <Row label="时间段" id="f-time"><Select id="f-time" value="请选择时间段" muted /></Row>
        <h3 className="text-[16px] leading-[30px] font-bold">原始数据包</h3>
        <Row label="源安全区域" id="f-szone" indent after={multi}><Select id="f-szone" value="trust" /></Row>
        <Row label="目的类型" indent><Radios name="dst-type" options={["目的安全区域", "出接口"]} checked={0} /></Row>
        <Row label="" indent after={multi}><Select label="目的安全区域" value="untrust" /></Row>
        <Row label="源地址" id="f-src" indent help>
          <div className="flex h-[30px] items-start border border-[#b8b8bf] bg-white pt-[4px] pl-[6px]">
            <span className="flex h-[19px] shrink-0 items-center border border-[#d2d2d2] bg-[#e8e8e8] pr-[6px] pl-[2px] leading-[17px]">
              <ComputerIcon />
              <span className="ml-[5px]">内网地址</span>
              <button type="button" aria-label="移除内网地址" className="ml-[9px]">
                <svg width="10" height="10" viewBox="0 0 10 10"><path d="M1 1l8 8M9 1l-8 8" stroke="#777" strokeWidth="2.600" /></svg>
              </button>
            </span>
            <input id="f-src" type="text" className="h-[19px] min-w-0 flex-1 px-1 outline-none" />
          </div>
        </Row>
        <Row label="目的地址" id="f-dst" indent help>
          <input id="f-dst" type="text" placeholder="请选择或输入地址" className={`h-[30px] pb-[6px] text-black ${FIELD}`} />
        </Row>
        <Row label="服务" id="f-svc" indent help>
          <input id="f-svc" type="text" placeholder="请选择或输入服务" className={`h-[30px] pb-[6px] text-black ${FIELD}`} />
        </Row>
        <h3 className="text-[16px] leading-[30px] font-bold">转换后的数据包</h3>
        <Row label="源地址转换为" indent><Radios name="src-to" options={["地址池中的地址", "出接口地址"]} checked={1} /></Row>
        <p className="leading-[30px]">
          提示：为保证设备顺利转发NAT业务，需要配置安全策略。 <a href="#" className={link}>[新建安全策略]</a>
        </p>
      </form>
      <div className="flex justify-end gap-[12px] rounded-b-[3px] border-b-[5px] border-[#c6c6c6] pt-[11px] pr-[24px] pb-[11px] text-[17px] leading-[29px]">
        <button type="button" className="h-[31px] w-[88px] rounded-[2px] border border-[#a3a3a8] bg-[linear-gradient(#f8f8f8,#dedede)]">确定</button>
        <button type="button" className="h-[31px] w-[88px] rounded-[2px] border border-[#a3a3a8] bg-[#dadada]">取消</button>
      </div>
    </div>
  );
}

export default function App() {
  return (
    <div className="relative flex min-h-screen flex-col overflow-hidden font-['Liberation_Sans','Noto_Sans_CJK_SC',sans-serif]">
      <BrowserBar />
      <Header />
      <div className="flex flex-1">
        <Sidebar />
        <Main />
      </div>
      <footer className={`flex h-[25px] shrink-0 items-center border-t border-[#222] text-[15px] leading-[20px] text-[#f0f0f0] ${DOTS}`}>
        <span className="flex-1" />
        <span className="pt-[5px]">版权所有 © 华为技术有限公司2014-2018 。保留一切权利。</span>
        <span className="flex flex-1 justify-end">
          <span className="mr-4 mb-[4px] font-['Lato',sans-serif] text-[12px] text-[#b5b5b5]">CSDN @Code-4</span>
        </span>
      </footer>
      <Dialog />
    </div>
  );
}
